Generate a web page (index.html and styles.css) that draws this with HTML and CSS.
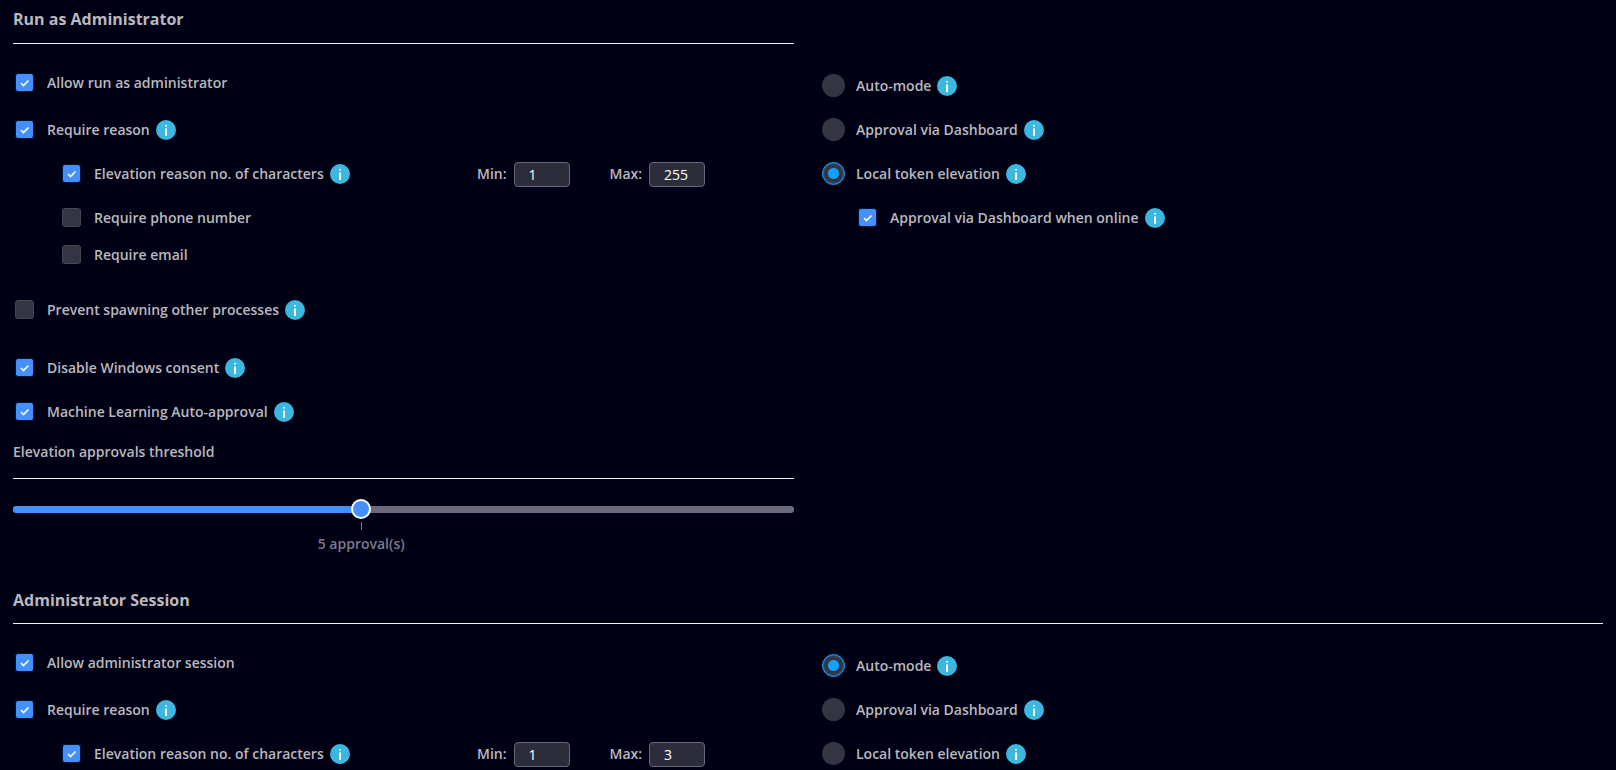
FILE: index.html
```
<!DOCTYPE html>
<html lang="en">
<head>
    <meta charset="UTF-8">
    <meta name="viewport" content="width=device-width, initial-scale=1.0">
    <title>Elevation Settings</title>
    <link rel="stylesheet" href="styles.css">
</head>
<body>
    <svg class="sprite" aria-hidden="true">
        <symbol id="info" viewBox="0 0 20 20">
            <circle cx="10" cy="10" r="10" fill="#3cb7e0"/>
            <path d="M9 5h2v1.6H9zM9 8.5h2v7.5H9z" fill="#fff"/>
        </symbol>
    </svg>

    <section class="settings">
        <div class="column">
            <h2 class="title">Run as Administrator</h2>
            <div class="row first">
                <input type="checkbox" id="run-allow" checked>
                <label for="run-allow">Allow run as administrator</label>
            </div>
            <div class="row">
                <input type="checkbox" id="run-reason" checked>
                <label for="run-reason">Require reason</label>
                <button type="button" class="info" aria-label="Info"><svg><use href="#info"/></svg></button>
            </div>
            <div class="row sub">
                <div class="option">
                    <input type="checkbox" id="run-chars" checked>
                    <label for="run-chars">Elevation reason no. of characters</label>
                    <button type="button" class="info" aria-label="Info"><svg><use href="#info"/></svg></button>
                </div>
                <div class="limits">
                    <div class="limit">
                        <label for="run-min">Min:</label>
                        <input type="text" inputmode="numeric" id="run-min" value="1">
                    </div>
                    <div class="limit">
                        <label for="run-max">Max:</label>
                        <input type="text" inputmode="numeric" id="run-max" value="255">
                    </div>
                </div>
            </div>
            <div class="row sub">
                <input type="checkbox" id="run-phone">
                <label for="run-phone">Require phone number</label>
            </div>
            <div class="row sub compact">
                <input type="checkbox" id="run-email">
                <label for="run-email">Require email</label>
            </div>
            <div class="row spaced">
                <input type="checkbox" id="run-spawn">
                <label for="run-spawn">Prevent spawning other processes</label>
                <button type="button" class="info" aria-label="Info"><svg><use href="#info"/></svg></button>
            </div>
            <div class="row spaced">
                <input type="checkbox" id="run-consent" checked>
                <label for="run-consent">Disable Windows consent</label>
                <button type="button" class="info" aria-label="Info"><svg><use href="#info"/></svg></button>
            </div>
            <div class="row">
                <input type="checkbox" id="run-ml" checked>
                <label for="run-ml">Machine Learning Auto-approval</label>
                <button type="button" class="info" aria-label="Info"><svg><use href="#info"/></svg></button>
            </div>
            <div class="threshold" style="--pos: 44.44%">
                <label class="threshold-title" for="threshold">Elevation approvals threshold</label>
                <input type="range" id="threshold" min="1" max="10" value="5">
                <div class="scale">
                    <output class="mark" for="threshold">5 approval(s)</output>
                </div>
            </div>
        </div>

        <div class="column modes">
            <div class="row">
                <input type="radio" name="run-mode" id="run-auto">
                <label for="run-auto">Auto-mode</label>
                <button type="button" class="info" aria-label="Info"><svg><use href="#info"/></svg></button>
            </div>
            <div class="row">
                <input type="radio" name="run-mode" id="run-dashboard">
                <label for="run-dashboard">Approval via Dashboard</label>
                <button type="button" class="info" aria-label="Info"><svg><use href="#info"/></svg></button>
            </div>
            <div class="row">
                <input type="radio" name="run-mode" id="run-token" checked>
                <label for="run-token">Local token elevation</label>
                <button type="button" class="info" aria-label="Info"><svg><use href="#info"/></svg></button>
            </div>
            <div class="row nested">
                <input type="checkbox" id="run-online" checked>
                <label for="run-online">Approval via Dashboard when online</label>
                <button type="button" class="info" aria-label="Info"><svg><use href="#info"/></svg></button>
            </div>
        </div>
    </section>

    <section class="settings">
        <h2 class="title wide">Administrator Session</h2>
        <div class="column">
            <div class="row first">
                <input type="checkbox" id="session-allow" checked>
                <label for="session-allow">Allow administrator session</label>
            </div>
            <div class="row">
                <input type="checkbox" id="session-reason" checked>
                <label for="session-reason">Require reason</label>
                <button type="button" class="info" aria-label="Info"><svg><use href="#info"/></svg></button>
            </div>
            <div class="row sub">
                <div class="option">
                    <input type="checkbox" id="session-chars" checked>
                    <label for="session-chars">Elevation reason no. of characters</label>
                    <button type="button" class="info" aria-label="Info"><svg><use href="#info"/></svg></button>
                </div>
                <div class="limits">
                    <div class="limit">
                        <label for="session-min">Min:</label>
                        <input type="text" inputmode="numeric" id="session-min" value="1">
                    </div>
                    <div class="limit">
                        <label for="session-max">Max:</label>
                        <input type="text" inputmode="numeric" id="session-max" value="3">
                    </div>
                </div>
            </div>
        </div>

        <div class="column modes">
            <div class="row">
                <input type="radio" name="session-mode" id="session-auto" checked>
                <label for="session-auto">Auto-mode</label>
                <button type="button" class="info" aria-label="Info"><svg><use href="#info"/></svg></button>
            </div>
            <div class="row">
                <input type="radio" name="session-mode" id="session-dashboard">
                <label for="session-dashboard">Approval via Dashboard</label>
                <button type="button" class="info" aria-label="Info"><svg><use href="#info"/></svg></button>
            </div>
            <div class="row">
                <input type="radio" name="session-mode" id="session-token">
                <label for="session-token">Local token elevation</label>
                <button type="button" class="info" aria-label="Info"><svg><use href="#info"/></svg></button>
            </div>
        </div>
    </section>
</body>
</html>
```
FILE: styles.css
```
* {
    box-sizing: border-box;
}

html {
    scrollbar-width: none;
}

body {
    margin: 0;
    padding: 0 13px;
    background-color: #000014;
    color: #b9b9bf;
    font-family: 'Open Sans', 'Noto Sans', sans-serif;
    font-size: 14px;
    font-weight: 600;
    line-height: 20px;
}

.sprite {
    display: none;
}

.settings {
    display: grid;
    grid-template-columns: 1fr 1fr;
    column-gap: 28px;
}

.title {
    margin: 0;
    height: 44px;
    padding-top: 7px;
    border-bottom: 1px solid #f0f0f5;
    font-size: 16px;
    font-weight: 700;
    line-height: 24px;
}

.title.wide {
    grid-column: 1 / -1;
    height: 43px;
}

/* option rows */
.row {
    display: flex;
    align-items: center;
    min-height: 44px;
    padding-left: 2px;
}

.row.first {
    margin: 17px 0 3px;
}

.row.sub {
    padding-left: 49px;
}

.row.compact {
    min-height: 30px;
}

.row.spaced {
    margin-top: 14px;
}

.row.compact + .row.spaced {
    margin-top: 18px;
}

.option {
    display: flex;
    align-items: center;
    width: 415px;
}

.modes .row {
    padding-left: 0;
}

.modes .row.nested {
    padding-left: 36px;
}

.settings .modes {
    padding-top: 64px;
}

.title.wide ~ .modes {
    padding-top: 20px;
}

/* tick boxes and radios */
input[type="checkbox"] {
    appearance: none;
    flex: none;
    width: 19px;
    height: 19px;
    margin: 0 13px 1px 0;
    border: 1px solid #474655;
    border-radius: 3px;
    background-color: #353443;
}

input[type="checkbox"]:checked {
    border-color: #001436;
    background: #4490ff url("data:image/svg+xml,%3Csvg xmlns='http://www.w3.org/2000/svg' viewBox='0 0 17 17'%3E%3Cpath d='M5 9l2.500 2.500L12.500 6.500' fill='none' stroke='white' stroke-width='1.600'/%3E%3C/svg%3E") center / 17px 17px no-repeat;
}

input[type="radio"] {
    appearance: none;
    flex: none;
    width: 23px;
    height: 23px;
    margin: 0 11px 1px 0;
    border-radius: 50%;
    background-color: #353443;
}

input[type="radio"]:checked {
    border: 1px solid #129fff;
    background-image: radial-gradient(circle, #129fff 5px, transparent 6px);
    box-shadow: inset 0 0 0 1px rgba(18, 159, 255, 0.4);
}

.info {
    width: 20px;
    height: 20px;
    margin-left: 6px;
    padding: 0;
    border: none;
    background: none;
    cursor: pointer;
}

.info svg {
    display: block;
    width: 20px;
    height: 20px;
}

/* min / max fields */
.limits {
    display: flex;
    gap: 40px;
}

.limit {
    display: flex;
    align-items: center;
    gap: 7px;
}

.limit input {
    width: 56px;
    height: 25px;
    padding: 0 14px;
    border: 1px solid #6a6878;
    border-radius: 4px;
    background-color: #2d2c3a;
    color: #fff;
    font-family: inherit;
    font-size: 14px;
}

/* approvals slider */
.threshold {
    padding-bottom: 27px;
}

.threshold-title {
    display: block;
    height: 45px;
    padding-top: 8px;
    border-bottom: 1px solid #f0f0f5;
}

input[type="range"] {
    appearance: none;
    display: block;
    width: 100%;
    height: 20px;
    margin: 20px 0 3px;
    background: none;
}

input[type="range"]::-webkit-slider-runnable-track {
    height: 7px;
    border-radius: 3px;
    background: linear-gradient(to right, #4490ff var(--pos), #6b697a var(--pos));
}

input[type="range"]::-webkit-slider-thumb {
    appearance: none;
    width: 20px;
    height: 20px;
    margin-top: -7px;
    border: 2px solid #fff;
    border-radius: 50%;
    background-color: #4490ff;
}

.scale {
    padding: 0 10px;
}

.mark {
    display: flex;
    flex-direction: column;
    align-items: center;
    width: 120px;
    margin-left: calc(var(--pos) - 60px);
    color: #7d7b8c;
}

.mark::before {
    content: "";
    width: 1px;
    height: 8px;
    margin-bottom: 4px;
    background-color: #7d7b8c;
}
```
